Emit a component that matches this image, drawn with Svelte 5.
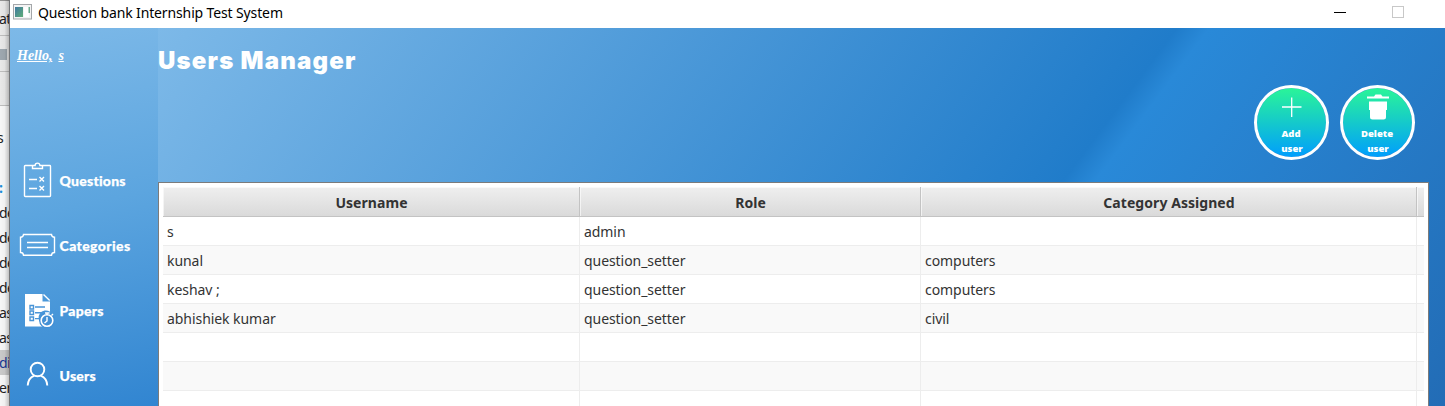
<script>
  const nav = ['Questions', 'Categories', 'Papers', 'Users'];
  const rows = [
    ['s', 'admin', ''],
    ['kunal', 'question_setter', 'computers'],
    ['keshav ;', 'question_setter', 'computers'],
    ['abhishiek kumar', 'question_setter', 'civil'],
    ['', '', ''],
    ['', '', ''],
    ['', '', '']
  ];
  const files = ['s', '', ':', 'de', 'de', 'de', 'de', 'as', 'as', 'di', 'er'];
</script>

<div class="screen">
  <div class="behind">
    <div class="tab">at</div>
    <div class="tool"><i></i></div>
    <div class="bar"></div>
    <div class="files">
      {#each files as f}
        <div class="file" class:link={f === ':'} class:current={f === 'di'}>{f}</div>
      {/each}
    </div>
  </div>
  <div class="window">
    <header class="titlebar">
      <svg class="appicon" width="19" height="16" viewBox="0 0 19 16">
        <defs>
          <linearGradient id="pane" x1="0" y1="0" x2="1" y2="1">
            <stop offset="0" stop-color="#3f78a0" /><stop offset="1" stop-color="#5fae78" />
          </linearGradient>
        </defs>
        <rect x=".5" y=".5" width="18" height="14.5" fill="#f4f4f4" stroke="#a4a7aa" />
        <rect x="2" y="3" width="8" height="10" fill="url(#pane)" />
        <rect x="11" y="3" width="5" height="10" fill="#fff" />
        <rect x="15.500" y="3" width="1.500" height="6" fill="#6ba98c" />
      </svg>
      <span class="apptitle">Question bank Internship Test System</span>
      <span class="min"></span>
      <span class="max"></span>
    </header>
    <div class="body">
      <aside>
        <div class="hello"><u>Hello,</u><u>s</u></div>
        <nav>
          {#each nav as item, i}
            <div class="item item{i}">
              <svg width="37" height="36" viewBox="0 0 37 36" fill="none" stroke="#fff" stroke-width="1.400">
                {#if i === 0}
                  <path d="M14.500 3.500H6.200a.7.7 0 0 0-.7.7V33.800a.7.7 0 0 0 .7.7H30.800a.7.7 0 0 0 .7-.7V4.200a.7.7 0 0 0-.7-.7H22.500M14.500 3.500a1 1 0 0 0-1 1V6.500H23.500V4.500a1 1 0 0 0-1-1H20.900a2.400 2.400 0 0 0-4.800 0Z" />
                  <path d="M10 17.500h8M10 26.500h8M20.500 15l4.500 4.500M25 15l-4.500 4.500M20.500 24l4.500 4.500M25 24l-4.500 4.500" />
                {:else if i === 1}
                  <path d="M4.500 7.500H32.500a3 3 0 0 0 3 2.800V25.500a3 3 0 0 0-3 2.800H4.500A3 3 0 0 0 1.500 25.500V10.300A3 3 0 0 0 4.500 7.500Z" />
                  <path d="M8 15.500h21M8 20.500h21" />
                {:else if i === 2}
                  <path d="M6 2H23.500V9.500H31V19.800A6.500 6.500 0 0 0 22.500 31.500L24.500 34.500H6Z" fill="#fff" stroke="none" />
                  <path d="M24.500 2.500L30.700 8.500" />
                  <g stroke="#4894d7" stroke-width="1.400">
                    <path d="M11 13.500h3.500v3.500H11ZM11 19h3.500v3.500H11ZM11 25h3.500v3.500H11ZM16 15h10M16 20.800h7.500M16 26.600h5.500" />
                  </g>
                  <circle cx="28" cy="28.500" r="7.200" fill="#4390d5" stroke="#4390d5" />
                  <circle cx="28" cy="28.500" r="5.800" stroke-width="1.600" />
                  <path d="M28 25v4l-2.500 2M28 23v-2M26 21h4.500M32.500 23.500l1.500-1.500" />
                {:else}
                  <g stroke-width="1.900">
                    <circle cx="18.500" cy="12.500" r="6.800" />
                    <path d="M8.700 28.500c.3-5 3-8.500 6.300-9.700M22 18.800c3.300 1.200 6 4.700 6.300 9.700" />
                  </g>
                {/if}
              </svg>
              <span>{item}</span>
            </div>
          {/each}
        </nav>
      </aside>
      <main>
        <div class="top">
          <h1>Users Manager</h1>
          <div class="actions">
            <button>
              <svg width="28" height="28" viewBox="0 0 28 28"><path d="M4 13H23.500M13.700 3.500V23" stroke="#fff" stroke-width="1.300" /></svg>
              <b>Add</b><b>user</b>
            </button>
            <button class="del">
              <svg width="28" height="28" viewBox="0 0 28 28" fill="#fff"><path d="M3 2.500H10L11.500 .5H17L18.500 2.500H25V4.500H3ZM5 7.500H23V16H22V23Q22 25.500 19.500 25.500H8.500Q6 25.500 6 23V16H5Z" /></svg>
              <b>Delete</b><b>user</b>
            </button>
          </div>
        </div>
        <section class="table">
          <div class="row head">
            <div>Username</div><div>Role</div><div>Category Assigned</div><div></div>
          </div>
          {#each rows as row}
            <div class="row">
              {#each row as cell}<div>{cell}</div>{/each}
              <div></div>
            </div>
          {/each}
        </section>
      </main>
    </div>
  </div>
</div>

<style>
  :global(body) { overflow: hidden; }
  .screen { display: flex; width: 1445px; height: 406px; overflow: hidden; font-family: "Noto Sans", sans-serif; background: #fff; }
  .behind { position: relative; flex: 0 0 9px; overflow: hidden; background: #fff; font-size: 14px; color: #222; border-right: 1px solid #747679; }
  .behind::after { content: ""; position: absolute; inset: 0; background: linear-gradient(90deg, rgba(0, 0, 0, .03), rgba(0, 0, 0, .06) 50%, rgba(0, 0, 0, .24)); }
  .tab, .tool, .bar { box-sizing: border-box; background: #f0f0f0; border-bottom: 1px solid #c4c4c4; }
  .tab { height: 36px; line-height: 36px; border-top: 1px solid #999; }
  .tab, .file { text-indent: -1px; letter-spacing: -.5px; }
  .tool { height: 36px; padding-top: 13px; }
  .tool i { display: block; width: 7px; height: 11px; background: #a3adb5; }
  .bar { height: 34px; }
  .files { padding-top: 19px; }
  .file { height: 25px; line-height: 25px; }
  .file:first-child { text-indent: -3px; }
  .link { color: #2090e0; font-weight: bold; }
  .current { background: #d0d0d0; color: #173a9a; }
  .window { flex: 1; display: flex; flex-direction: column; min-width: 0; }
  .titlebar { box-sizing: border-box; flex: 0 0 28px; display: flex; align-items: center; padding: 0 41px 4px 3px; background: #fff; color: #000; }
  .apptitle { flex: 1; margin-left: 6px; font: 14px/20px "Noto Sans", sans-serif; letter-spacing: -.13px; white-space: nowrap; padding-top: 1px; }
  .min { width: 12px; height: 1px; background: #000; margin-right: 46px; }
  .max { box-sizing: border-box; width: 12px; height: 12px; border: 1px solid #c8c8c8; }
  .body { flex: 1; display: flex; min-height: 0; }
  aside { flex: 0 0 148px; background: linear-gradient(168deg, #7db9e8, #5ca5df 47%, #3185d1); color: #fff; }
  .hello { display: flex; gap: 6px; height: 97px; padding: 19px 0 0 7px; font: italic bold 14px/17px "Liberation Serif", serif; }
  nav { display: flex; flex-direction: column; padding-top: 4px; }
  .item { display: flex; align-items: center; gap: 3.500px; height: 65px; padding-left: 9px; font: 900 14px/20px Lato, sans-serif; letter-spacing: .25px; -webkit-text-stroke: .25px #fff; }
  .item svg { margin-bottom: 2px; }
  .item1 { letter-spacing: .4px; }
  main { flex: 1; display: flex; flex-direction: column; min-width: 0; background: linear-gradient(126.700deg, #7db9e8 0, #207cca 817px, #2989d8 843px, #226ab3 1290px); }
  .top { flex: 0 0 154px; display: flex; justify-content: space-between; align-items: flex-start; padding-right: 30px; }
  h1 { margin: 17px 0 0; font: 900 24px/32px Inter, sans-serif; letter-spacing: 1.200px; color: #fff; white-space: nowrap; }
  .actions { display: flex; gap: 11px; padding-top: 57px; }
  button { box-sizing: border-box; width: 75px; height: 75px; padding: 6px 0 0; border: 3px solid #fff; border-radius: 50%; display: flex; flex-direction: column; align-items: center; color: #fff; background: linear-gradient(#2af598, #009efd) padding-box; font: bold 9.500px/15px "Noto Sans", sans-serif; }
  button svg { flex: none; margin-bottom: 4px; }
  b { margin-left: -1px; }
  b:last-child { margin-left: 1px; }
  .table { box-sizing: border-box; width: 1271px; height: 240px; flex: none; padding: 4px 4px 0; background: #fff; border: 1px solid #7b7b7b; font-size: 14px; color: #333; }
  .row { display: grid; grid-template-columns: 417px 341px 496px 1fr; grid-template-rows: 100%; height: 29px; line-height: 30px; letter-spacing: -.06px; }
  .row > div { box-sizing: border-box; padding-left: 4px; border-right: 1px solid #ededed; border-bottom: 1px solid #ededed; white-space: nowrap; }
  .row > div:last-child { border-right: 0; }
  .row:nth-child(odd) { background: #f9f9f9; }
  .row.head { height: 30px; line-height: 31px; font-weight: bold; letter-spacing: .06px; background: linear-gradient(#efefef, #d9d9d9); }
  .row.head > div { text-align: center; padding: 0 0 0 1px; border-color: #c3c3c3; box-shadow: inset 1px 1px rgba(255, 255, 255, .6); }
</style>
